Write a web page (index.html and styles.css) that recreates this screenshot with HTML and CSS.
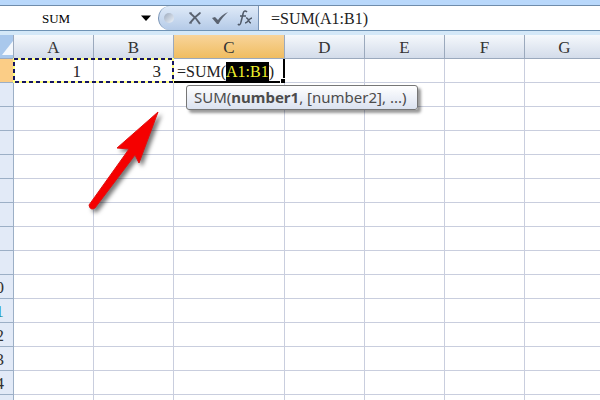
FILE: index.html
```html
<!DOCTYPE html>
<html lang="en">
<head>
<meta charset="utf-8">
<title>Spreadsheet</title>
<link rel="stylesheet" href="styles.css">
</head>
<body>
<div class="bar">
  <input class="name-box" aria-label="Name box" value="SUM">
  <button class="drop" aria-label="Show names"><svg width="10" height="6" viewBox="0 0 10 6"><path d="M0 0.500h10L5 6z"/></svg></button>
  <div class="tools">
    <span class="knob"></span>
    <button aria-label="Cancel"><svg width="16" height="16" viewBox="0 0 16 16"><path d="M3 3C7 6 10 9 13 14M13 3C9 6 6 9 3 13" fill="none" stroke="#5b6370" stroke-width="2"/><path d="M2 3h3M12 3h2M2 13h3" stroke="#5b6370"/></svg></button>
    <button aria-label="Enter"><svg width="18" height="16" viewBox="0 0 18 16"><path d="M1 8l3-1 3 3C9 7 12 4 17 2 14 5 10 9 7.500 14H6z" fill="#5b6370"/></svg></button>
    <button aria-label="Insert function"><svg width="16" height="18" viewBox="0 0 16 18"><path d="M10 3C8 1 6.500 2 6 5L4 13C3.500 16 2 16.500 1 15M3 7h6M9 9c3-1 2 5 5 5M15 9c-3 0-4 5-7 5" fill="none" stroke="#4f5968" stroke-width="1.500"/></svg></button>
  </div>
  <input class="formula" aria-label="Formula bar" value="=SUM(A1:B1)">
</div>
<main class="sheet">
<table>
  <colgroup><col class="c-num"><col><col><col class="c-wide"><col><col><col><col></colgroup>
  <thead><tr><th class="corner"><svg width="11" height="14" viewBox="0 0 11 14"><path d="M11 0v14H0z" fill="#f4f8fd"/></svg></th><th>A</th><th>B</th><th class="on">C</th><th>D</th><th>E</th><th>F</th><th>G</th></tr></thead>
  <tbody id="rows">
    <tr><th class="on"></th>
      <td class="num range">1<svg class="ants" width="161" height="26" viewBox="0 0 161 26"><g fill="none"><path class="under" d="M1 1h159v23H1z"/><path class="over" d="M1 1h159v23H1z"/></g></svg></td>
      <td class="num">3</td>
      <td class="edit">=SUM(<mark>A1:B1</mark>)<span class="handle"></span><div class="tip" role="tooltip">SUM(<b>number1</b>, [number2], ...)</div></td>
      <td></td><td></td><td></td><td></td></tr>
  </tbody>
</table>
<svg class="arrow" viewBox="0 0 80 110"><path d="M76 8L57 59L53 51L13 104Q8 107 7 101L47 45L35 44Z"/></svg>
</main>
<script src="rows.js"></script>
</body>
</html>
```
FILE: rows.js
```js
// Row labels below 10 lie wholly under the window's left edge, so they stay blank.
const body = document.getElementById("rows");
for (let n = 2; n <= 15; n++) {
  const row = body.insertRow();
  const head = document.createElement("th");
  if (n >= 10 && n < 15) head.textContent = n;
  if (n === 11) head.className = "teal";
  row.append(head);
  for (let c = 0; c < 7; c++) row.insertCell();
}
```
FILE: styles.css
```css
* { box-sizing: border-box; }
body {
  margin: 0;
  height: 100vh;
  overflow: hidden;
  background: #fff;
  color: #222;
  font: 16px "Liberation Serif", serif;
}
button, input { margin: 0; padding: 0; border: 0; background: none; color: inherit; font: inherit; outline: 0; }
button { display: flex; align-items: center; justify-content: center; }
.bar {
  display: flex;
  height: 35px;
  border-top: 5px solid #b9d8fb;
  border-bottom: 4px solid #d4e8f8;
  box-shadow: inset 0 1px #6f8cab, inset 0 -1px #6f93b5, 0 0 0 1px #8aa5c1;
}
.name-box { width: 112px; padding-top: 2px; text-align: center; font-size: 13px; color: #000; }
.drop { width: 24px; margin: 0 0 0 22px; }
.tools {
  display: flex;
  align-items: center;
  gap: 8px;
  width: 101px;
  margin: 1px 0;
  padding-left: 5px;
  border: 1px solid #7893b5;
  border-width: 0 1px;
  border-radius: 12px 0 0 12px;
  background: linear-gradient(#dfeaf8, #b4cae7);
}
.knob { width: 10px; height: 10px; margin-right: 5px; border-radius: 5px; background: linear-gradient(135deg, #9daabd, #eef4fb); }
.formula { flex: 1; min-width: 0; padding: 2px 0 0 12px; }
.sheet { position: relative; overflow: hidden; height: calc(100vh - 35px); }
table { table-layout: fixed; width: 629px; margin-left: -24px; border-collapse: separate; border-spacing: 0; }
col { width: 80px; }
.c-num { width: 38px; }
.c-wide { width: 111px; }
th, td { height: 24px; padding: 3px 0 0; border: 0 solid #c9cede; border-width: 0 1px 1px 0; line-height: 20px; white-space: nowrap; }
th { font-weight: normal; font-size: 17px; color: #333; }
thead th { background: linear-gradient(#f5f8fc, #d3dcea); border-color: #9ba9bd; }
tbody th { padding-left: 2px; background: #e2eaf7; border-color: #9cafc6; }
thead .on { background: linear-gradient(#f8d49a, #f0bd61); }
tbody .on { background: #fbcd86; }
tbody .teal { color: #1f8fa5; }
thead .corner { background: #a9c8ec; text-align: right; line-height: 0; }
td.num { padding-right: 12px; text-align: right; font-size: 17px; }
.range, .edit { position: relative; }
.ants { position: absolute; left: -1px; top: -1px; z-index: 1; }
.under { stroke: #ffff80; stroke-width: 2px; }
.over { stroke: #151560; stroke-width: 2px; stroke-dasharray: 4 3; }
td.edit { padding: 3px 0 0 3px; border: 2px solid #000; border-width: 0 2px 2px 0; line-height: 19px; }
mark { display: inline-block; background: #000; color: #eff02c; }
.handle { position: absolute; right: -2px; bottom: -2px; width: 5px; height: 5px; background: #000; border: 1px solid #fff; border-width: 1px 0 0 1px; }
.tip {
  position: absolute;
  left: 12px;
  top: 26px;
  z-index: 2;
  padding: 0 11px 1px 7px;
  border: 1px solid #767676;
  border-radius: 3px;
  background: linear-gradient(#fff, #dbe2f0);
  box-shadow: 3px 3px 3px #0006;
  color: #4c4c4c;
  font: 15px/22px "Noto Sans", sans-serif;
}
.arrow { position: absolute; left: 82px; top: 69px; width: 80px; height: 110px; fill: #f50000; stroke: #e01010; filter: drop-shadow(3px 3px 2px #0008); }
```
